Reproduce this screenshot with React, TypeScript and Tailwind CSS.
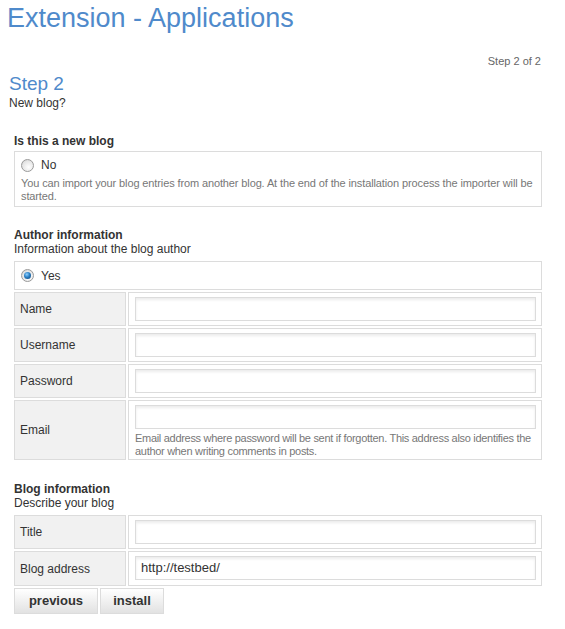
import React from 'react';

function Radio({ checked }: { checked?: boolean }) {
  return (
    <span className="relative inline-flex h-[13px] w-[13px] items-center justify-center rounded-full border border-[#9a9a9a] bg-[radial-gradient(circle_at_60%_65%,#ffffff_0%,#e6e6e6_60%,#c8c8c8_100%)]">
      {checked && (
        <span className="h-[7px] w-[7px] rounded-full bg-[radial-gradient(circle_at_40%_35%,#8fd0ff_0%,#2a7fc4_45%,#0d3f70_100%)]" />
      )}
    </span>
  );
}

function Row({ label, value, tall, note }: { label: string; value?: string; tall?: boolean; note?: string }) {
  return (
    <div className="grid grid-cols-[112px_1fr] gap-[2px]">
      <div className="flex items-center border border-[#dcdcdc] bg-[#f1f1f1] pl-[5px] text-[12px]">{label}</div>
      <div className={'border border-[#dcdcdc] bg-white pl-[6px] pr-[4px] ' + (tall ? 'pt-[4px] pb-[1px]' : 'py-[4px]')}>
        <div className="mr-[1px] flex h-[24px] items-center border border-[#dcdcdc] bg-white pl-[5px] text-[13px] shadow-[inset_0_2px_3px_rgba(0,0,0,0.08)]">
          {value}
        </div>
        {note && <p className="mt-[3px] text-[11px] leading-[13px] tracking-[-0.3px] text-[#777]">{note}</p>}
      </div>
    </div>
  );
}

export default function App() {
  return (
    <div className="h-[629px] w-[565px] bg-white font-['Liberation_Sans',Arial,sans-serif] text-[#333]">
      <h1 className="pl-[7px] text-[27px] leading-[36px] text-[#4f8acb]">Extension - Applications</h1>

      <div className="pl-[9px] pr-[24px]">
        <div className="mt-[18px] text-right text-[11px] leading-[14px] text-[#666]">Step 2 of 2</div>
        <div className="mt-[4px] text-[19px] leading-[23px] text-[#4f8acb]">Step 2</div>
        <div className="mt-[1px] text-[12px] leading-[14px]">New blog?</div>
      </div>

      <div className="pl-[14px] pr-[23px] text-[12px] leading-[14px]">
        <h3 className="mt-[24px] font-bold">Is this a new blog</h3>
        <div className="mt-[3px] border border-[#dcdcdc] px-[6px] pt-[6px] pb-[3px]">
          <label className="flex items-center gap-[7px] text-[12px]">
            <Radio />
            No
          </label>
          <p className="mt-[5px] text-[11px] leading-[13px] tracking-[-0.12px] text-[#777]">
            You can import your blog entries from another blog. At the end of the installation process the importer will be started.
          </p>
        </div>

        <h3 className="mt-[21px] font-bold">Author information</h3>
        <div>Information about the blog author</div>
        <div className="mt-[5px] flex flex-col gap-[2px]">
          <label className="flex h-[29px] items-center gap-[7px] border border-[#dcdcdc] pl-[6px]">
            <Radio checked />
            Yes
          </label>
          <div className="flex flex-col gap-[2px]">
            <div className="grid h-[34px]"><Row label="Name" /></div>
            <div className="grid h-[34px]"><Row label="Username" /></div>
            <div className="grid h-[34px]"><Row label="Password" /></div>
            <Row
              label="Email"
              tall
              note="Email address where password will be sent if forgotten. This address also identifies the author when writing comments in posts."
            />
          </div>
        </div>

        <h3 className="mt-[22px] font-bold">Blog information</h3>
        <div>Describe your blog</div>
        <div className="mt-[5px] flex flex-col gap-[2px]">
          <div className="grid h-[34px]"><Row label="Title" /></div>
          <div className="grid h-[35px]"><Row label="Blog address" value="http://testbed/" /></div>
          <div className="flex gap-[2px]">
            <button className="h-[26px] w-[84px] border border-[#dcdcdc] bg-[linear-gradient(#ffffff,#e2e2e2)] text-[13px] font-bold text-[#333]">previous</button>
            <button className="h-[26px] w-[64px] border border-[#dcdcdc] bg-[linear-gradient(#ffffff,#e2e2e2)] text-[13px] font-bold text-[#333]">install</button>
          </div>
        </div>
      </div>
    </div>
  );
}
